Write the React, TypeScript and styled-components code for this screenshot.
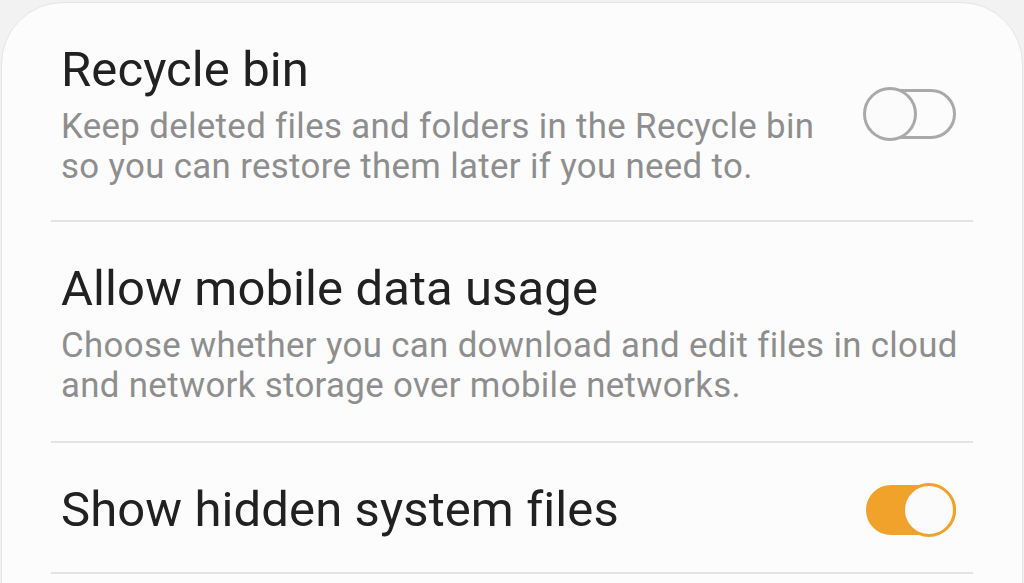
import React from 'react'
import styled, { createGlobalStyle } from 'styled-components'

const GlobalStyle = createGlobalStyle`
    html, body {
        margin: 0;
        padding: 0;
        background: #f2f2f2;
        font-family: Roboto, "Noto Sans", sans-serif;
    }
`

interface SettingItem {
    title: string
    description?: string
    checked?: boolean
}

const ITEMS: SettingItem[] = [
    {
        title: 'Recycle bin',
        description: 'Keep deleted files and folders in the Recycle bin so you can restore them later if you need to.',
        checked: false,
    },
    {
        title: 'Allow mobile data usage',
        description:
            'Choose whether you can download and edit files in cloud and network storage over mobile networks.',
    },
    {
        title: 'Show hidden system files',
        checked: true,
    },
]

const Switch = ({ checked }: { checked: boolean }) => (
    <SwitchRoot>
        <Track checked={checked} />
        <Knob checked={checked} />
    </SwitchRoot>
)

const App = () => {
    return (
        <>
            <GlobalStyle />
            <Page>
                <Card>
                    {ITEMS.map((item, index) => (
                        <Row key={item.title} first={index === 0} compact={!item.description}>
                            <Texts>
                                <Title>{item.title}</Title>
                                {item.description && <Description>{item.description}</Description>}
                            </Texts>
                            {item.checked !== undefined && <Switch checked={item.checked} />}
                        </Row>
                    ))}
                </Card>
            </Page>
        </>
    )
}

export default App

const Page = styled.div`
    height: 583px;
    overflow: hidden;
    padding: 2px 1px 0 1px;
    box-sizing: border-box;
`

const Card = styled.div`
    min-height: 640px;
    background: #fcfcfc;
    border: 1.5px solid #e4e4e4;
    border-radius: 62px 62px 0 0;
    padding: 0 49px;
`

const Row = styled.div<{ first?: boolean; compact?: boolean }>`
    display: flex;
    align-items: center;
    gap: 24px;
    padding: 38px 4px ${(props) => (props.compact ? '33px' : props.first ? '34px' : '36px')} 10px;
    border-bottom: 2px solid #e3e3e3;
`

const Texts = styled.div`
    flex: 1;
    min-width: 0;
    display: flex;
    flex-direction: column;
    gap: 7px;
`

const Title = styled.div`
    font-size: 49px;
    line-height: 58px;
    color: #212121;
    letter-spacing: 0.1px;
`

const Description = styled.div`
    font-size: 34.8px;
    line-height: 40px;
    color: #8e8e8e;
    letter-spacing: 0.35px;
`

const SwitchRoot = styled.div`
    position: relative;
    flex: 0 0 auto;
    width: 93px;
    height: 54px;
    margin-right: 13px;
`

const Track = styled.div<{ checked: boolean }>`
    position: absolute;
    left: 3px;
    right: 0;
    top: 2px;
    bottom: 2px;
    box-sizing: border-box;
    border-radius: 25px;
    border: 3px solid ${(props) => (props.checked ? '#f1a22b' : '#a9a9a9')};
    background: ${(props) => (props.checked ? '#f1a22b' : 'transparent')};
`

const Knob = styled.div<{ checked: boolean }>`
    position: absolute;
    top: 0;
    left: ${(props) => (props.checked ? '39px' : '0')};
    width: 54px;
    height: 54px;
    box-sizing: border-box;
    border-radius: 50%;
    background: #fbfbfb;
    border: 3px solid ${(props) => (props.checked ? '#f1a22b' : '#a9a9a9')};
`
